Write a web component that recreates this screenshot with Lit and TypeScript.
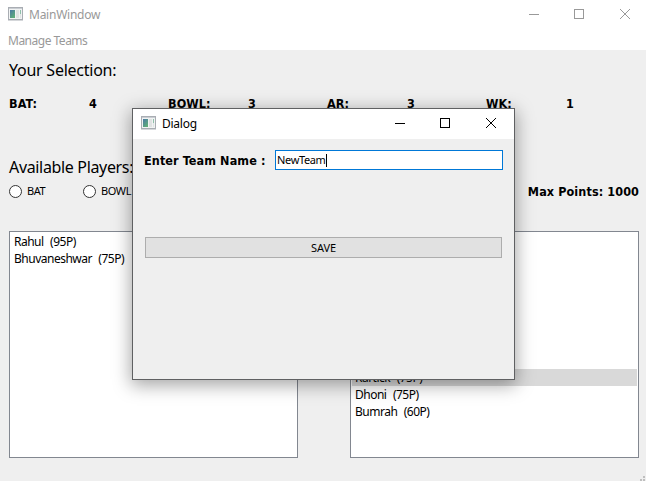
import { LitElement, html, css, svg } from "lit";
import { customElement, property } from "lit/decorators.js";

interface Player {
  name: string;
  points: number;
  selected?: boolean;
}

@customElement("window-bar")
class WindowBar extends LitElement {
  @property() heading = "";

  static styles = css`
    :host { display: flex; height: 30px; align-items: center; background: #fff; font: 12px/16px "Noto Sans", sans-serif; }
    .logo { width: 15px; height: 14px; margin: 0 0 2px 8px; flex: none; }
    .heading { margin-left: 6px; flex: 1; white-space: pre; letter-spacing: -0.25px; }
    .button { width: 46px; height: 30px; display: block; flex: none; }
  `;

  private button(shape: unknown) {
    return html`<svg class="button" viewBox="0 0 46 30" fill="none" stroke="currentColor">${shape}</svg>`;
  }

  render() {
    return html`
      <svg class="logo" viewBox="0 0 15 14">
        <defs>
          <linearGradient id="pane" x1="0" y1="0" x2="0.7" y2="1">
            <stop offset="0" stop-color="#4a78a4" /><stop offset="1" stop-color="#5fae78" />
          </linearGradient>
        </defs>
        <rect x="0.5" y="0.5" width="14" height="12" fill="#f1f3f3" stroke="#a9adb3" />
        <rect x="1" y="1" width="13" height="1" fill="#c9cdd2" />
        <rect x="2" y="3" width="5" height="8" fill="url(#pane)" />
        <rect x="8" y="3" width="3" height="8" fill="#dfe2e2" />
        <rect x="12" y="3" width="1" height="4" fill="#8fc0aa" />
        <rect x="12" y="7" width="1" height="4" fill="#e0e4e4" />
        <rect x="0" y="13" width="15" height="1" fill="#d5d7da" />
      </svg>
      <span class="heading">${this.heading}</span>
      ${this.button(svg`<path d="M18 14.5h10" />`)}
      ${this.button(svg`<rect x="17.5" y="9.5" width="9" height="9" />`)}
      ${this.button(svg`<path d="M17 9l10 10M27 9l-10 10" />`)}
    `;
  }
}

@customElement("player-list")
class PlayerList extends LitElement {
  @property({ attribute: false }) players: Player[] = [];

  static styles = css`
    :host { display: flex; flex-direction: column; box-sizing: border-box; height: 227px; padding: 1px; border: 1px solid #828790; background: #fff; }
    .row { height: 17px; padding-left: 3px; font: 12px/17px "Noto Sans", sans-serif; letter-spacing: -0.5px; word-spacing: 0.6px; white-space: pre; }
    .selected { background: #d9d9d9; }
  `;

  render() {
    return this.players.map(
      (p) => html`<div class="row ${p.selected ? "selected" : ""}">${p.name ? `${p.name}  (${p.points}P)` : ""}</div>`
    );
  }
}

@customElement("app-root")
class AppRoot extends LitElement {
  private counts = [["BAT:", 4], ["BOWL:", 3], ["AR:", 3], ["WK:", 1]];
  private available: Player[] = [
    { name: "Rahul", points: 95 },
    { name: "Bhuvaneshwar", points: 75 },
  ];
  private team: Player[] = [
    ...Array.from({ length: 8 }, () => ({ name: "", points: 0 })),
    { name: "Kartick", points: 75, selected: true },
    { name: "Dhoni", points: 75 },
    { name: "Bumrah", points: 60 },
  ];

  static styles = css`
    :host { display: block; position: relative; width: 646px; height: 481px; overflow: hidden; background: #efefef; color: #000; font-family: "Noto Sans", sans-serif; }
    .main-bar { color: #999; margin-right: -3px; }
    .dialog-bar { margin-right: -1px; }
    .menu { height: 20px; padding-left: 8px; background: #fff; color: #999; font-size: 12px; line-height: 21px; letter-spacing: -0.5px; }
    .title { padding-left: 9px; font-size: 16px; line-height: 22px; letter-spacing: -0.25px; white-space: pre; }
    .selection { padding-top: 9px; }
    .bold { font: bold 12.5px/16px "DejaVu Sans Condensed", "DejaVu Sans", sans-serif; letter-spacing: 0.1px; white-space: pre; }
    .counts { display: grid; grid-template-columns: repeat(4, 159px); padding: 15px 0 0 9px; }
    .count { display: grid; grid-template-columns: 80px 1fr; }
    .available { padding-top: 44px; letter-spacing: -0.34px; }
    .filters { display: flex; align-items: center; height: 16px; margin-top: 5px; padding: 0 7px 0 9px; }
    .radio { display: flex; align-items: center; gap: 5px; width: 74px; font-size: 11px; line-height: 16px; letter-spacing: -0.4px; }
    .dot { box-sizing: border-box; width: 13px; height: 13px; border: 1px solid #333; border-radius: 50%; background: #fff; }
    .points { margin-left: auto; padding-top: 2px; }
    .lists { display: grid; grid-template-columns: 289px 289px; gap: 52px; padding: 32px 0 0 9px; }
    .grip { position: absolute; right: 0; bottom: 0; width: 7px; height: 5px; fill: #bfbfbf; }
    .dialog { position: absolute; left: 132px; top: 108px; box-sizing: border-box; width: 383px; height: 272px; overflow: hidden; border: 1px solid #5f6062; background: #efefef; box-shadow: 0 4px 17px 1px rgba(0, 0, 0, 0.36); }
    .form { display: flex; align-items: center; height: 20px; padding: 11px 11px 0 11px; }
    .name { width: 131px; padding-top: 2px; }
    .field { display: flex; align-items: center; box-sizing: border-box; flex: 1; height: 20px; padding-left: 1px; border: 1px solid #0078d7; background: #fff; font-size: 11px; line-height: 18px; letter-spacing: -0.35px; }
    .caret { width: 1px; height: 13px; background: #000; }
    .save { display: block; box-sizing: border-box; width: 357px; height: 21px; margin: 67px 0 0 12px; padding: 0; border: 1px solid #adadad; background: #e1e1e1; color: #000; font: 11px/19px "Noto Sans", sans-serif; letter-spacing: -0.1px; }
  `;

  render() {
    return html`
      <window-bar class="main-bar" heading="MainWindow"></window-bar>
      <div class="menu">Manage Teams</div>
      <div class="title selection">Your Selection:</div>
      <div class="counts">
        ${this.counts.map(([k, v]) => html`<div class="count bold"><span>${k}</span><span>${v}</span></div>`)}
      </div>
      <div class="title available">Available Players:</div>
      <div class="filters">
        <label class="radio"><span class="dot"></span>BAT</label>
        <label class="radio"><span class="dot"></span>BOWL</label>
        <span class="bold points">Max Points: 1000</span>
      </div>
      <div class="lists">
        <player-list .players=${this.available}></player-list>
        <player-list .players=${this.team}></player-list>
      </div>
      <svg class="grip" viewBox="0 0 7 5">
        <path d="M4 0h2v2h-2zM4 3h2v2h-2zM1 3h2v2h-2z" />
      </svg>
      <section class="dialog">
        <window-bar class="dialog-bar" heading="Dialog"></window-bar>
        <div class="form">
          <span class="bold name">Enter Team Name :</span>
          <div class="field"><span>NewTeam</span><span class="caret"></span></div>
        </div>
        <button class="save">SAVE</button>
      </section>
    `;
  }
}
